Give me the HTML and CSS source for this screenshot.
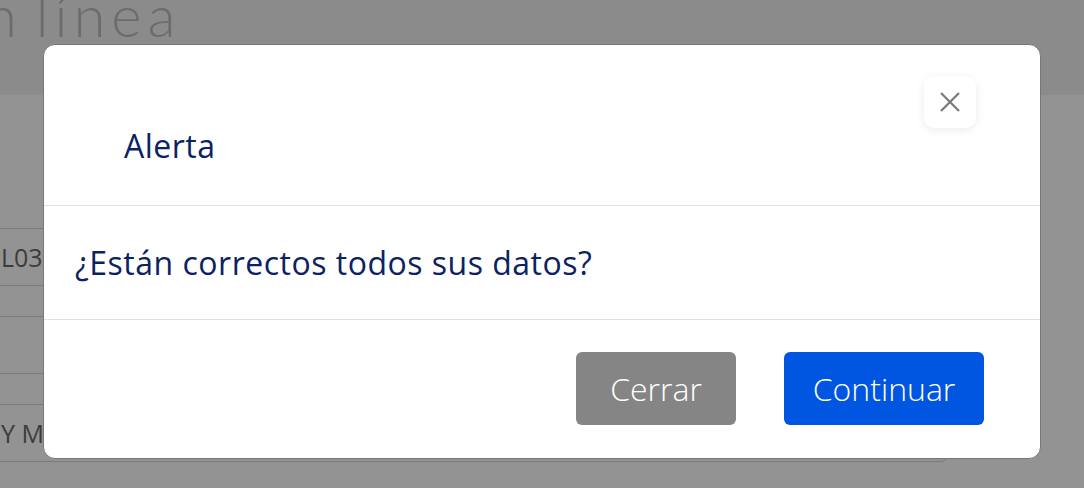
FILE: index.html
```html
<!DOCTYPE html>
<html lang="es">
<head>
<meta charset="utf-8">
<title>Alerta</title>
<link rel="stylesheet" href="styles.css">
</head>
<body>
<div class="page">
  <header class="page-head">
    <h1 class="page-title">n línea</h1>
  </header>
  <main class="form">
    <div class="field"><span class="field-text">L03</span></div>
    <div class="field"></div>
    <div class="field"><span class="field-text">Y MA</span></div>
    <div class="field field-last"></div>
  </main>
</div>

<div class="modal" role="dialog" aria-labelledby="modal-title">
  <div class="modal-header">
    <h2 class="modal-title" id="modal-title">Alerta</h2>
    <button class="modal-close" type="button" aria-label="Cerrar">
      <svg width="22" height="22" viewBox="0 0 22 22" aria-hidden="true">
        <path d="M2 2 L20 20 M20 2 L2 20" stroke="#7a7a7a" stroke-width="2.2" fill="none"/>
      </svg>
    </button>
  </div>
  <div class="modal-body">
    <p class="modal-text">¿Están correctos todos sus datos?</p>
  </div>
  <div class="modal-footer">
    <button class="btn btn-grey" type="button">Cerrar</button>
    <button class="btn btn-blue" type="button">Continuar</button>
  </div>
</div>
</body>
</html>
```

FILE: styles.css
```css
html, body {
  margin: 0;
  padding: 0;
}

body {
  width: 1084px;
  height: 488px;
  overflow: hidden;
  background: #939393;
  font-family: "Open Sans", "Lato", sans-serif;
}

.page-head {
  height: 95px;
  background: #8b8b8b;
  overflow: hidden;
}

.page-title {
  margin: -17px 0 0 -15px;
  font-family: "Lato", sans-serif;
  font-weight: 300;
  font-size: 58px;
  line-height: 64px;
  letter-spacing: 6px;
  word-spacing: -9px;
  color: #6c6c6c;
  white-space: nowrap;
}

.form {
  display: flex;
  flex-direction: column;
  gap: 30px;
  padding-top: 133px;
  margin-left: -20px;
  width: 967px;
}

.field {
  height: 56px;
  border: 1px solid #7b7b7b;
  border-radius: 6px;
  display: flex;
  align-items: center;
  padding-left: 16px;
  flex-shrink: 0;
}

.field-last {
  height: 20px;
  border-bottom: none;
  border-radius: 6px 6px 0 0;
}

.field-text {
  font-family: "Open Sans", sans-serif;
  font-size: 25px;
  color: #3c3c3c;
  margin-left: 4px;
}

.modal {
  position: absolute;
  left: 43px;
  top: 44px;
  width: 998px;
  height: 415px;
  box-sizing: border-box;
  background: #fff;
  border: 1px solid #777;
  border-radius: 12px;
  display: flex;
  flex-direction: column;
  overflow: hidden;
}

.modal-header {
  height: 161px;
  flex-shrink: 0;
  border-bottom: 1px solid #dfdfe6;
  display: flex;
  align-items: flex-start;
  justify-content: space-between;
  padding: 0 64px 0 80px;
  box-sizing: border-box;
}

.modal-title {
  margin: 81px 0 0 0;
  font-family: "Open Sans", sans-serif;
  font-weight: 500;
  font-size: 32px;
  line-height: 40px;
  letter-spacing: 0.5px;
  color: #0b2263;
}

.modal-close {
  margin-top: 31px;
  width: 52px;
  height: 52px;
  border: none;
  background: #fff;
  border-radius: 10px;
  box-shadow: 0 2px 10px rgba(0, 0, 0, 0.08);
  display: flex;
  align-items: center;
  justify-content: center;
  padding: 0;
}

.modal-body {
  height: 114px;
  flex-shrink: 0;
  box-sizing: border-box;
  border-bottom: 1px solid #dfdfe6;
  display: flex;
  align-items: center;
  padding-left: 31px;
}

.modal-text {
  margin: 0;
  font-family: "Open Sans", sans-serif;
  font-size: 32px;
  line-height: 40px;
  letter-spacing: 0.5px;
  color: #0b2263;
}

.modal-footer {
  flex: 1;
  display: flex;
  justify-content: flex-end;
  align-items: flex-start;
  gap: 48px;
  padding: 32px 56px 0 0;
}

.btn {
  height: 73px;
  border: none;
  border-radius: 6px;
  color: #fff;
  font-family: "Open Sans", sans-serif;
  font-weight: 300;
  font-size: 32px;
  padding: 0;
}

.btn-grey {
  width: 160px;
  background: #858585;
}

.btn-blue {
  width: 200px;
  background: #0055e1;
}
```
